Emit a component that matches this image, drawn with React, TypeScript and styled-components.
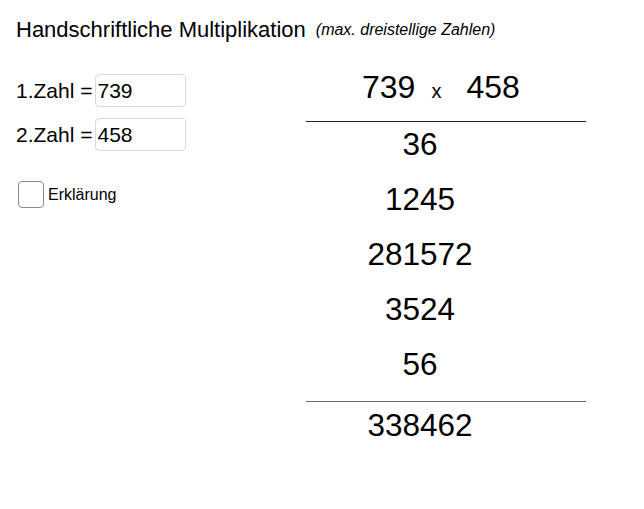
import styled, { createGlobalStyle } from 'styled-components'

const GlobalStyle = createGlobalStyle`
    html, body {
        margin: 0;
        padding: 0;
        background: #ffffff;
    }
    body {
        font-family: 'Liberation Sans', Arial, sans-serif;
        color: #000000;
    }
`

const Page = styled.div`
    width: 644px;
    height: 509px;
    box-sizing: border-box;
    padding: 17px 0 0 16px;
    overflow: hidden;
`

const Header = styled.div`
    display: flex;
    align-items: baseline;
    gap: 10px;
    height: 25px;
`

const Title = styled.div`
    font-size: 22px;
    line-height: 25px;
`

const Hint = styled.div`
    font-size: 16px;
    font-style: italic;
    position: relative;
    top: -2px;
`

const Body = styled.div`
    display: flex;
`

const Controls = styled.div`
    width: 290px;
    display: flex;
    flex-direction: column;
    padding-top: 32px;
    gap: 11px;
`

const Field = styled.label`
    display: flex;
    align-items: center;
    font-size: 21px;
    gap: 3px;
`

const NumberInput = styled.input`
    width: 91px;
    height: 33px;
    box-sizing: border-box;
    border: 1px solid #d9d9d9;
    border-radius: 4px;
    padding: 0 0 0 1px;
    font-family: inherit;
    font-size: 21px;
    color: #000000;
    outline: none;
`

const CheckRow = styled.label`
    display: flex;
    align-items: center;
    gap: 4px;
    margin-top: 19px;
    padding-left: 2px;
    font-size: 16px;
`

const CheckBox = styled.span`
    width: 26px;
    height: 27px;
    box-sizing: border-box;
    border: 1px solid #8a8a8a;
    border-radius: 4px;
`

const Sheet = styled.div`
    width: 280px;
    display: flex;
    flex-direction: column;
    padding-top: 27px;
`

const Factors = styled.div`
    display: flex;
    align-items: baseline;
    padding-left: 56px;
    font-size: 32px;
    height: 38px;
    margin-bottom: 14px;
`

const Times = styled.span`
    font-size: 20px;
    margin: 0 25px 0 16px;
`

const Rule = styled.hr<{ $tone: string }>`
    width: 100%;
    margin: 0;
    border: none;
    border-top: 1px solid ${(p) => p.$tone};
`

const Partials = styled.div`
    display: flex;
    flex-direction: column;
    gap: 11px;
    padding-bottom: 15px;
`

const Value = styled.div<{ $h: number }>`
    height: ${(p) => p.$h}px;
    display: flex;
    align-items: center;
    justify-content: center;
    padding-right: 52px;
    font-size: 31.5px;
`

const partials = ['36', '1245', '281572', '3524', '56']

export default function App() {
    return (
        <>
            <GlobalStyle />
            <Page>
                <Header>
                    <Title>Handschriftliche Multiplikation</Title>
                    <Hint>(max. dreistellige Zahlen)</Hint>
                </Header>
                <Body>
                    <Controls>
                        <Field>
                            1.Zahl = <NumberInput defaultValue="739" />
                        </Field>
                        <Field>
                            2.Zahl = <NumberInput defaultValue="458" />
                        </Field>
                        <CheckRow>
                            <CheckBox />
                            Erklärung
                        </CheckRow>
                    </Controls>
                    <Sheet>
                        <Factors>
                            <span>739</span>
                            <Times>x</Times>
                            <span>458</span>
                        </Factors>
                        <Rule $tone="#222222" />
                        <Partials>
                            {partials.map((p) => (
                                <Value key={p} $h={44}>
                                    {p}
                                </Value>
                            ))}
                        </Partials>
                        <Rule $tone="#6a6a6a" />
                        <Value $h={46}>338462</Value>
                    </Sheet>
                </Body>
            </Page>
        </>
    )
}
